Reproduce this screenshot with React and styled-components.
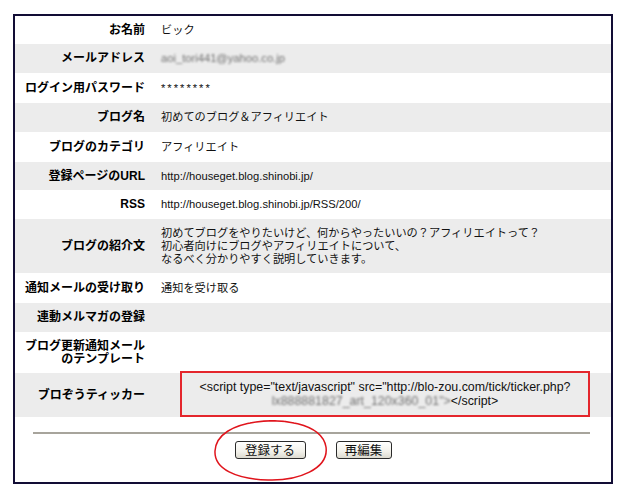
import React from "react";
import styled, { createGlobalStyle } from "styled-components";

const Global = createGlobalStyle`
  html, body { margin: 0; padding: 0; background: #ffffff; }
  body { font-family: "Liberation Sans", "Noto Sans CJK JP", sans-serif; color: #111; }
`;

const Page = styled.div`
  position: relative;
  width: 636px;
  height: 497px;
  padding: 14px 0 0 13px;
  box-sizing: border-box;
`;

const Frame = styled.div`
  width: 600px;
  height: 470px;
  box-sizing: border-box;
  border: 2px solid #120d35;
  display: flex;
  flex-direction: column;
`;

const Row = styled.div`
  display: grid;
  grid-template-columns: 138px 1fr;
  height: ${(p) => p.h || 29}px;
  background: ${(p) => (p.shade ? "#ececec" : "#ffffff")};
`;

const Label = styled.div`
  display: flex;
  align-items: center;
  justify-content: flex-end;
  text-align: right;
  padding-right: 8px;
  font-size: 12px;
  font-weight: bold;
  line-height: 13px;
  color: #000;
  white-space: nowrap;
`;

const Value = styled.div`
  display: flex;
  align-items: center;
  padding-left: 8px;
  font-size: 11.2px;
  line-height: 13px;
  color: #111;
  white-space: nowrap;
`;

const Blur = styled.span`
  color: #707070;
  filter: blur(0.9px);
`;

const Stars = styled.span`
  letter-spacing: 2px;
`;

const TickerCell = styled.div`
  padding-left: 27px;
  padding-right: 21px;
`;

const TickerBox = styled.div`
  height: 46px;
  margin-top: -2px;
  box-sizing: border-box;
  border: 2px solid #e4262c;
  display: flex;
  flex-direction: column;
  justify-content: center;
  align-items: center;
  font-size: 12.4px;
  line-height: 14px;
  color: #111;
  white-space: nowrap;
`;

const Footer = styled.div`
  flex: 1;
  display: flex;
  flex-direction: column;
  align-items: center;
  padding-top: 15px;
`;

const Rule = styled.div`
  align-self: stretch;
  height: 2px;
  margin: 0 21px 0 18px;
  background: #a7a49c;
`;

const Buttons = styled.div`
  display: flex;
  gap: 30px;
  margin-top: 7px;
`;

const Button = styled.button`
  height: 18px;
  width: ${(p) => p.w}px;
  padding: 0;
  border: 1px solid #2a2a2a;
  border-radius: 3px;
  background: linear-gradient(#ffffff, #f2f1ea 60%, #dcdad0);
  font-family: "Noto Sans CJK JP", sans-serif;
  font-size: 12.5px;
  line-height: 16px;
  color: #111;
`;

const Ellipse = styled.svg`
  position: absolute;
  left: 210px;
  top: 417px;
  pointer-events: none;
`;

export default function App() {
  return (
    <Page>
      <Global />
      <Frame>
        <Row h={28}>
          <Label>お名前</Label>
          <Value>ビック</Value>
        </Row>
        <Row shade>
          <Label>メールアドレス</Label>
          <Value><Blur>aoi_tori441@yahoo.co.jp</Blur></Value>
        </Row>
        <Row h={30}>
          <Label>ログイン用パスワード</Label>
          <Value><Stars>********</Stars></Value>
        </Row>
        <Row shade>
          <Label>ブログ名</Label>
          <Value>初めてのブログ＆アフィリエイト</Value>
        </Row>
        <Row h={30}>
          <Label>ブログのカテゴリ</Label>
          <Value>アフィリエイト</Value>
        </Row>
        <Row shade h={28}>
          <Label>登録ページのURL</Label>
          <Value>http://houseget.blog.shinobi.jp/</Value>
        </Row>
        <Row>
          <Label>RSS</Label>
          <Value>http://houseget.blog.shinobi.jp/RSS/200/</Value>
        </Row>
        <Row shade h={54}>
          <Label>ブログの紹介文</Label>
          <Value>
            初めてブログをやりたいけど、何からやったいいの？アフィリエイトって？
            <br />
            初心者向けにブログやアフィリエイトについて、
            <br />
            なるべく分かりやすく説明していきます。
          </Value>
        </Row>
        <Row h={30}>
          <Label>通知メールの受け取り</Label>
          <Value>通知を受け取る</Value>
        </Row>
        <Row shade>
          <Label>連動メルマガの登録</Label>
          <Value />
        </Row>
        <Row h={41}>
          <Label>
            ブログ更新通知メール
            <br />
            のテンプレート
          </Label>
          <Value />
        </Row>
        <Row shade h={44}>
          <Label>ブロぞうティッカー</Label>
          <TickerCell>
            <TickerBox>
              <span>&lt;script type="text/javascript" src="http://blo-zou.com/tick/ticker.php?</span>
              <span>
                <Blur>lx888881827_art_120x360_01"&gt;</Blur>&lt;/script&gt;
              </span>
            </TickerBox>
          </TickerCell>
        </Row>
        <Footer>
          <Rule />
          <Buttons>
            <Button w={71}>登録する</Button>
            <Button w={56}>再編集</Button>
          </Buttons>
        </Footer>
      </Frame>
      <Ellipse width="124" height="68" viewBox="0 0 124 68">
        <path
          d="M40 6 C70 0 112 6 116 30 C119 52 88 64 58 63 C26 62 4 52 5 34 C6 17 24 8 46 5 C60 3 74 4 84 6"
          fill="none"
          stroke="#e0141c"
          strokeWidth="1.5"
        />
      </Ellipse>
    </Page>
  );
}
